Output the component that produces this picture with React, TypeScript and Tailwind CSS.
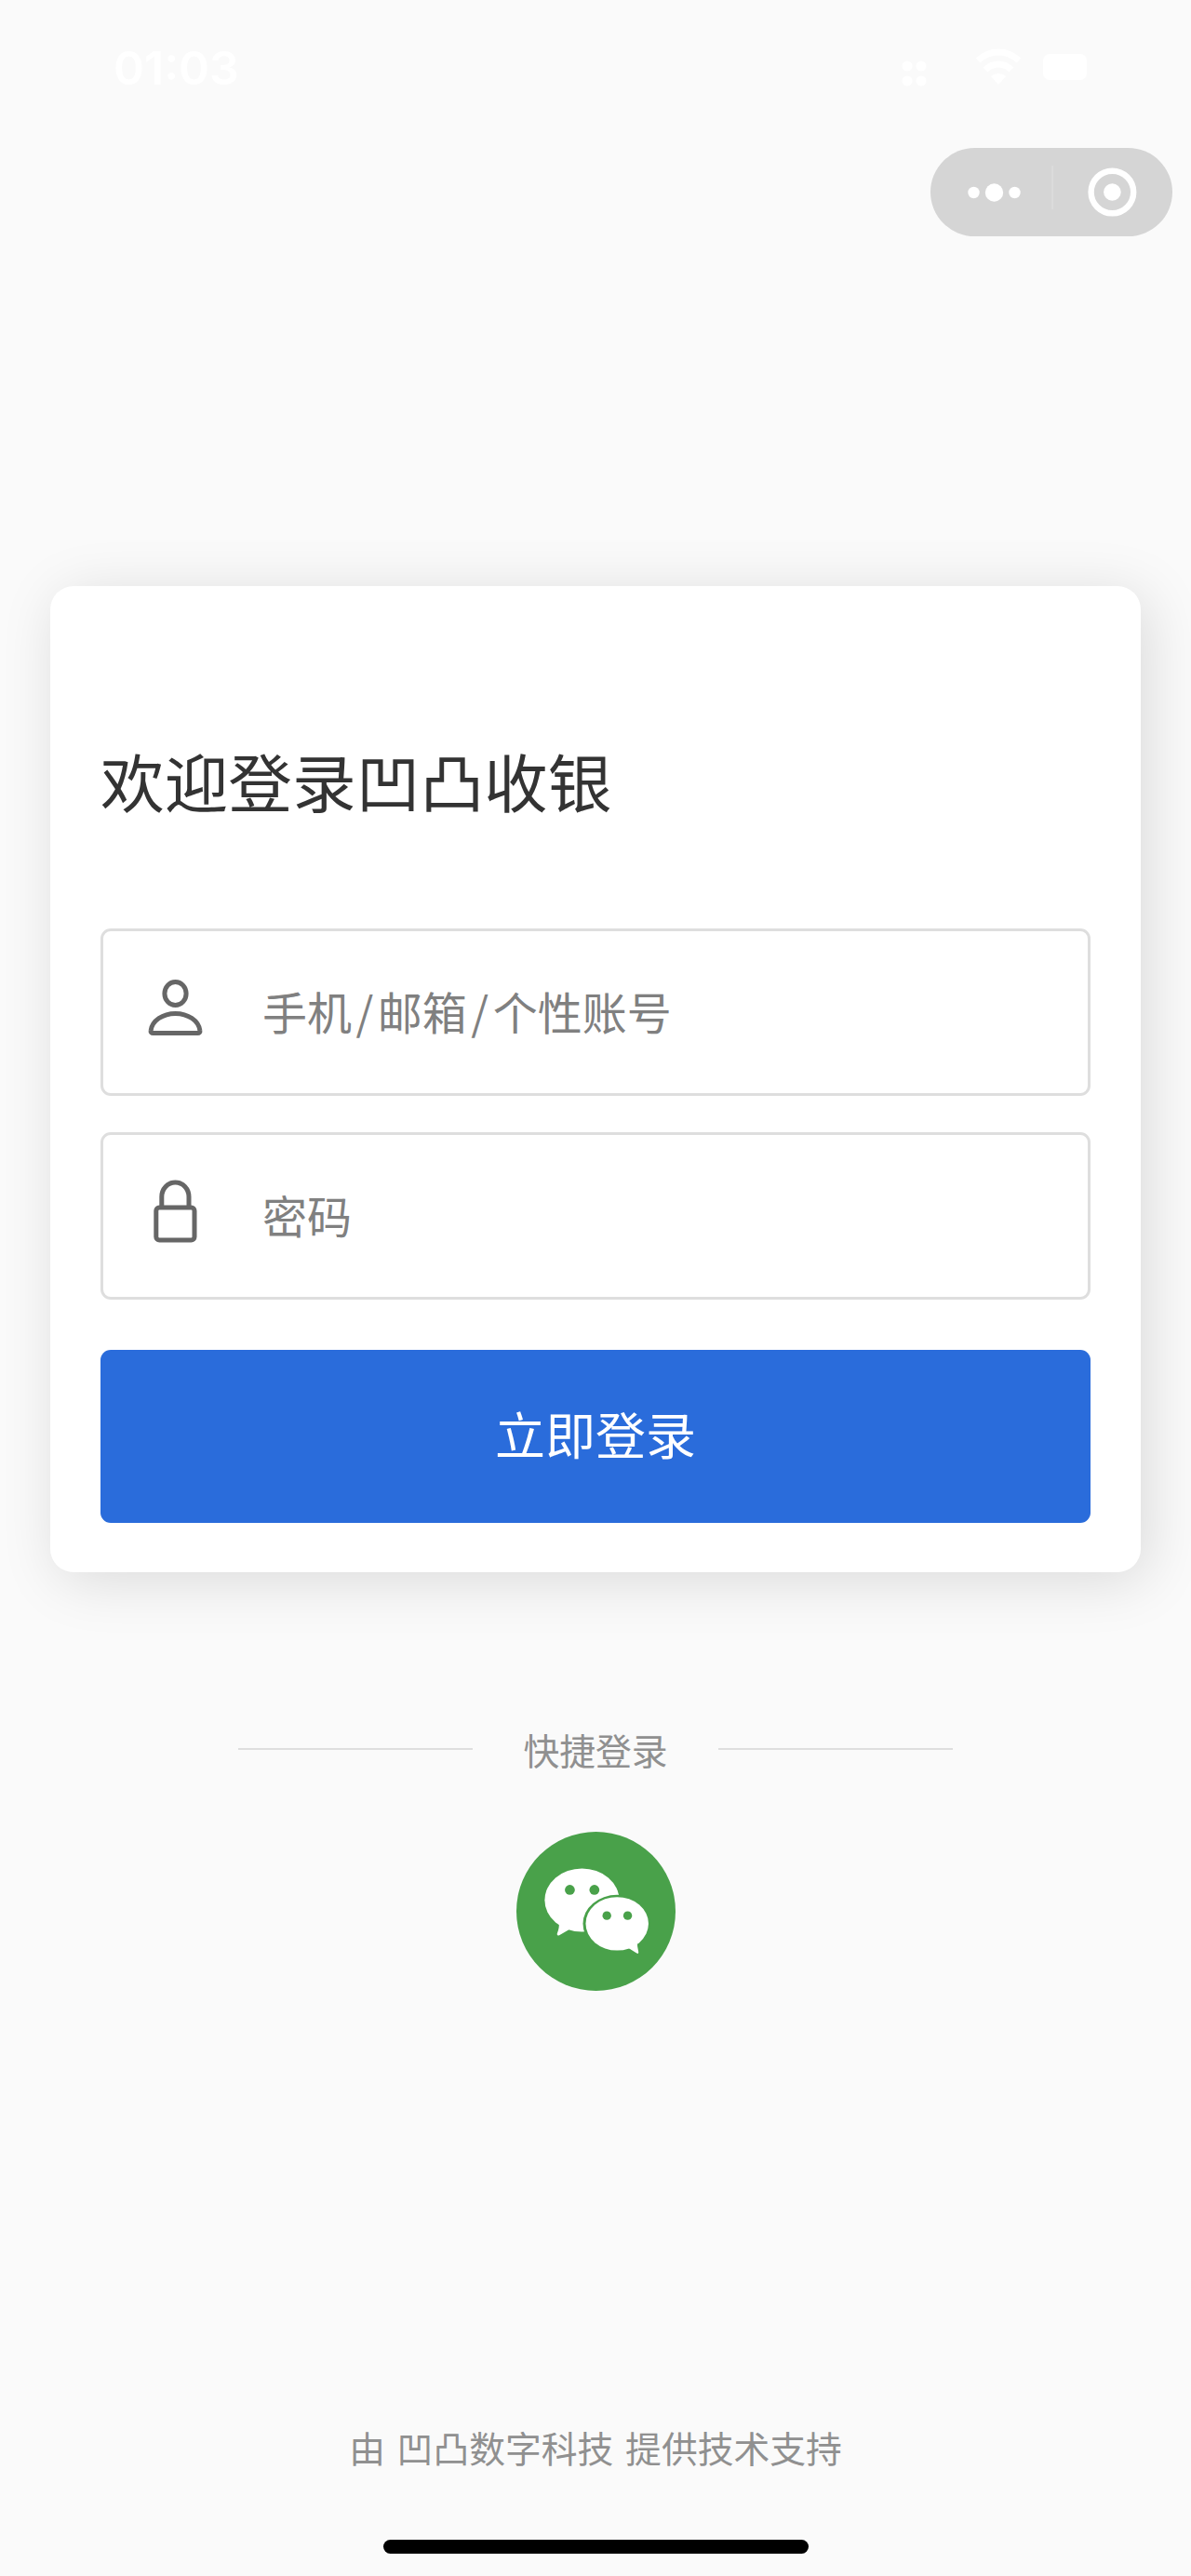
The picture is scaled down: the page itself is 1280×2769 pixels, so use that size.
import type { ReactNode } from "react";

function StatusBar() {
  return (
    <div className="flex h-[159px] items-start justify-between pl-[122px] pr-[89px] pt-[42px] text-white">
      <span className="font-['Inter'] text-[50px] font-semibold leading-[62px]">01:03</span>
      <svg className="mt-[8px]" width="224" height="46" viewBox="0 0 224 46" fill="currentColor">
        {/* signal */}
        <circle cx="8" cy="21" r="5.5" />
        <circle cx="23" cy="21" r="5.5" />
        <circle cx="8" cy="37" r="5.5" />
        <circle cx="23" cy="37" r="5.5" />
        {/* wifi */}
        <g fill="none" stroke="currentColor" strokeWidth="7">
          <path d="M84 15c13-12 31-12 44 0" />
          <path d="M92 25c8-8 20-8 28 0" />
        </g>
        <path d="M98 32c5-4 11-4 16 0l-8 9z" />
        {/* battery */}
        <rect x="154" y="8" width="47" height="28" rx="7" />
      </svg>
    </div>
  );
}

function Capsule() {
  return (
    <div className="ml-auto mr-[20px] flex h-[95px] w-[260px] rounded-full bg-[#d5d5d5]">
      <svg width="260" height="95" viewBox="0 0 260 95" fill="#fff">
        <circle cx="46.5" cy="48" r="6.2" />
        <circle cx="68.5" cy="48" r="9.7" />
        <circle cx="90.5" cy="48" r="6.2" />
        <rect x="130" y="19" width="2" height="47" fill="#dbdbdb" />
        <circle cx="195.4" cy="47.5" r="22.8" fill="none" stroke="#fff" strokeWidth="6.4" />
        <circle cx="195.4" cy="47.5" r="9.3" />
      </svg>
    </div>
  );
}

function UserIcon() {
  return (
    <svg width="60" height="64" viewBox="0 0 60 64" fill="none" stroke="#666" strokeWidth="5" strokeLinejoin="round">
      <ellipse cx="30.5" cy="17" rx="11.6" ry="12.6" />
      <path d="M6.500 59.600h48a2.400 2.400 0 0 0 2.400-2.800C55.500 46 44 38.400 30.500 38.400S5.500 46 4.100 56.800a2.400 2.400 0 0 0 2.400 2.800z" />
    </svg>
  );
}

function LockIcon() {
  return (
    <svg width="60" height="72" viewBox="0 0 60 72" fill="none" stroke="#666" strokeWidth="5">
      <rect x="9.800" y="32" width="41.200" height="35" rx="3.500" />
      <path d="M15.800 32V20.500a14.600 15.500 0 0 1 29.200 0V32" />
    </svg>
  );
}

function Field({ icon, children }: { icon: ReactNode; children: ReactNode }) {
  return (
    <div className="flex h-[180px] items-center rounded-[11px] border-[3px] border-[#dedede] bg-white pl-[47px]">
      <div className="mb-[10px] w-[60px]">{icon}</div>
      <div className="mb-[4px] ml-[64px] whitespace-nowrap text-[48px] leading-[68px] text-[#808080]">
        {children}
      </div>
    </div>
  );
}

function LoginCard() {
  return (
    <div className="mx-[54px] mt-[376px] h-[1060px] rounded-[25px] bg-white px-[54px] pt-[156px] shadow-[8px_9px_62px_rgba(0,0,0,0.13)]">
      <h1 className="text-[68.7px] leading-[104px] text-[#333]">欢迎登录凹凸收银</h1>
      <div className="mt-[108px] flex flex-col gap-[39px]">
        <Field icon={<UserIcon />}>
          手机<span className="px-[4.5px]">/</span>邮箱<span className="px-[4.5px]">/</span>个性账号
        </Field>
        <Field icon={<LockIcon />}>密码</Field>
      </div>
      <button className="mt-[54px] block h-[186px] w-full rounded-[11px] bg-[#2a6cdb] pb-[6px] text-[54px] leading-[80px] text-white">
        立即登录
      </button>
    </div>
  );
}

function WechatLogo() {
  return (
    <svg width="171" height="171" viewBox="0 0 512 512">
      <circle cx="256" cy="256" r="256" fill="#49a14a" />
      <path d="M137 293q2 16-6 35-1 8 7 5l31-18z" fill="#fff" />
      <ellipse cx="211" cy="220" rx="120" ry="102" fill="#fff" />
      <ellipse cx="324" cy="296" rx="110" ry="93" fill="#49a14a" />
      <path d="M389 354q-1 14 4 34 0 6-6 3l-30-19z" fill="#fff" />
      <ellipse cx="324" cy="296" rx="101" ry="86" fill="#fff" />
      <g fill="#49a14a">
        <circle cx="172" cy="187" r="16" />
        <circle cx="251" cy="187" r="16" />
        <circle cx="291" cy="270" r="14" />
        <circle cx="358" cy="270" r="14" />
      </g>
    </svg>
  );
}

export default function App() {
  return (
    <div className="flex h-[2769px] w-[1280px] flex-col overflow-hidden bg-[#fafafa] font-['Noto_Sans_CJK_SC',sans-serif]">
      <StatusBar />
      <Capsule />
      <LoginCard />

      {/* Quick login */}
      <div className="mt-[160px] flex items-center justify-center">
        <div className="h-[2px] w-[252px] bg-[#dedede]" />
        <span className="w-[264px] pt-px text-center text-[38.8px] leading-[59px] text-[#909090]">快捷登录</span>
        <div className="h-[2px] w-[252px] bg-[#dedede]" />
      </div>
      <div className="mt-[59px] flex justify-center">
        <WechatLogo />
      </div>

      {/* Footer */}
      <p className="mt-auto text-center text-[38.8px] leading-[60px] text-[#909090] [word-spacing:4px]">
        由 凹凸数字科技 提供技术支持
      </p>
      <div className="mx-auto mb-[24px] mt-[70px] h-[15px] w-[457px] shrink-0 rounded-full bg-black" />
    </div>
  );
}
